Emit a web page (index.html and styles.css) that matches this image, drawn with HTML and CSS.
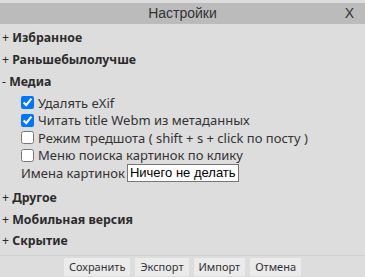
FILE: index.html
```html
<!DOCTYPE html>
<html lang="ru">
<head>
    <meta charset="UTF-8">
    <title>Настройки</title>
    <link rel="stylesheet" href="styles.css">
</head>
<body>
    <div class="panel">
        <div class="panel-title">
            <span>Настройки</span>
            <span class="close">X</span>
        </div>

        <div class="content">
            <div class="section"><span class="toggle">+</span> Избранное</div>
            <div class="section"><span class="toggle">+</span> Раньшебылолучше</div>
            <div class="section"><span class="toggle">-</span> Медиа</div>
            <div class="options">
                <label class="option"><input type="checkbox" checked> Удалять eXif</label>
                <label class="option"><input type="checkbox" checked> Читать title Webm из метаданных</label>
                <label class="option"><input type="checkbox"> Режим тредшота ( shift + s + click по посту )</label>
                <label class="option"><input type="checkbox"> Меню поиска картинок по клику</label>
                <div class="option">Имена картинок <select class="names"><option>Ничего не делать</option></select></div>
            </div>
            <div class="section"><span class="toggle">+</span> Другое</div>
            <div class="section"><span class="toggle">+</span> Мобильная версия</div>
            <div class="section"><span class="toggle">+</span> Скрытие</div>
        </div>

        <div class="actions">
            <button>Сохранить</button>
            <button>Экспорт</button>
            <button>Импорт</button>
            <button>Отмена</button>
        </div>
    </div>
</body>
</html>
```

FILE: styles.css
```css
body {
    margin: 0;
    padding-top: 3px;
    background: #dddddd;
    font-family: "Noto Sans", sans-serif;
    font-size: 13px;
    color: #333;
}
.panel-title {
    position: relative;
    height: 21px;
    line-height: 21px;
    background: #bbbbbb;
    text-align: center;
    font-family: "Liberation Sans", Arial, sans-serif;
    font-size: 14px;
    color: #333;
}
.close {
    position: absolute;
    right: 11px;
    top: 0;
}
.content {
    padding-top: 3px;
}
.section {
    height: 22px;
    line-height: 22px;
    padding-left: 2px;
    font-weight: bold;
    font-size: 12.3px;
    color: #2b2b2b;
}
.toggle {
    font-weight: normal;
}
.options {
    padding-left: 21px;
    padding-top: 1px;
}
.option {
    display: flex;
    align-items: center;
    height: 17.5px;
}
.option input {
    margin: 0 4px 0 0;
    width: 13px;
    height: 13px;
}
.names {
    margin-left: 2px;
    appearance: none;
    width: 112px;
    height: 18px;
    padding: 0 2px;
    border: 1px solid #767676;
    border-radius: 0;
    background: #fff;
    color: #000;
    font-family: "Liberation Sans", Arial, sans-serif;
    font-size: 13px;
}
.options + .section {
    margin-top: 5px;
}
.section:last-child {
    margin-top: -1px;
}
.actions {
    margin-top: 3px;
    border-top: 1px solid #cfcfcf;
    padding-top: 2px;
    display: flex;
    justify-content: center;
    gap: 5px;
}
.actions button {
    border: none;
    background: #ebebeb;
    color: #333;
    font-family: "Noto Sans", sans-serif;
    font-size: 11px;
    padding: 1px 5px;
    height: 18px;
}
```
